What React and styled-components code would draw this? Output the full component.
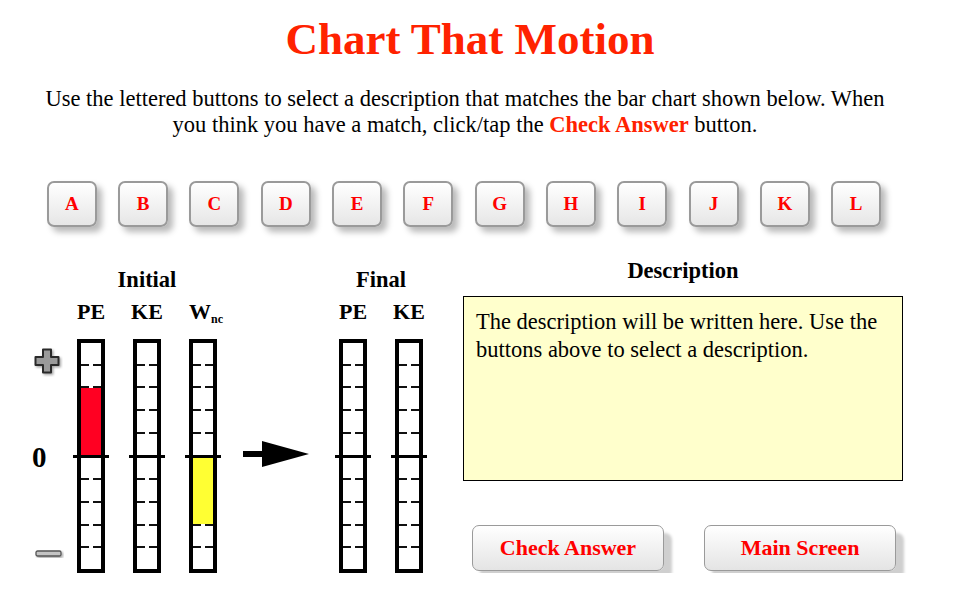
import React from "react";
import styled, { createGlobalStyle } from "styled-components";

const GlobalStyle = createGlobalStyle`
  html, body { margin: 0; padding: 0; background: #ffffff; }
  body { font-family: "Liberation Serif", "Times New Roman", serif; color: #000; }
`;

const Page = styled.div`
  width: 930px;
  padding-top: 14px;
  display: flex;
  flex-direction: column;
`;

const Title = styled.h1`
  margin: 0;
  padding-left: 10px;
  text-align: center;
  font-size: 45px;
  line-height: 50px;
  font-weight: bold;
  color: #ff2200;
`;

const Intro = styled.p`
  margin: 22px auto 0;
  width: 862px;
  text-align: center;
  font-size: 22.5px;
  line-height: 26px;
`;

const Em = styled.span`
  color: #ff2200;
  font-weight: bold;
`;

const LetterRow = styled.div`
  margin-top: 43px;
  display: flex;
  justify-content: center;
  gap: 21.3px;
  padding-right: 2px;
`;

const LetterButton = styled.button`
  width: 50px;
  height: 46px;
  box-sizing: border-box;
  border: 2px solid #9a9a9a;
  border-radius: 7px;
  background: linear-gradient(#ffffff, #e6e6e6);
  box-shadow: 5px 5px 6px rgba(0, 0, 0, 0.28);
  font-family: "Liberation Serif", serif;
  font-weight: bold;
  font-size: 19px;
  color: #ff0000;
  padding: 0;
  cursor: pointer;
`;

const Section = styled.div`
  margin-top: 33px;
  display: flex;
  align-items: flex-start;
`;

const ChartArea = styled.div`
  display: flex;
  align-items: flex-end;
  padding: 9px 0 0 32px;
`;

const ScaleColumn = styled.div`
  width: 31px;
  height: 234px;
  display: flex;
  flex-direction: column;
  align-items: flex-start;
  margin-right: 14px;
`;

const PlusIcon = styled.svg`
  margin: 9px 0 0 2px;
  display: block;
`;

const ZeroLabel = styled.div`
  margin-top: 68px;
  font-size: 29px;
  font-weight: bold;
  line-height: 24px;
`;

const MinusIcon = styled.svg`
  margin: 81px 0 0 3px;
  display: block;
`;

const Group = styled.div`
  display: flex;
  flex-direction: column;
  align-items: center;
  margin-left: ${(p) => p.$offset || 0}px;
`;

const GroupHeading = styled.div`
  font-size: 22.5px;
  font-weight: bold;
  line-height: 22px;
  margin-bottom: 10px;
`;

const BarsRow = styled.div`
  display: flex;
  gap: 28px;
`;

const BarColumn = styled.div`
  width: 28px;
  display: flex;
  flex-direction: column;
  align-items: center;
`;

const BarLabel = styled.div`
  font-size: 22px;
  font-weight: bold;
  line-height: 22px;
  margin-bottom: 16px;
  white-space: nowrap;
  padding-left: ${(p) => p.$shift || 0}px;
`;

const Sub = styled.span`
  font-size: 12px;
  line-height: 0;
  vertical-align: -4px;
`;

const BarFrame = styled.div`
  width: 28px;
  height: 234px;
  box-sizing: border-box;
  border: 4px solid #000;
  display: flex;
  flex-direction: column;
  background: #fff;
`;

const Cell = styled.div`
  flex: 1;
  background: ${(p) => p.$fill || "#ffffff"};
`;

const Tick = styled.div`
  height: 2px;
  flex-shrink: 0;
  background: ${(p) =>
    p.$fill
      ? p.$fill
      : "linear-gradient(to right, #111 0 42%, transparent 42% 58%, #111 58% 100%)"};
`;

const ZeroLine = styled.div`
  height: 3px;
  flex-shrink: 0;
  margin: 0 -8px;
  background: #000;
`;

const Arrow = styled.svg`
  display: block;
  margin: 0 0 106px 26px;
`;

const DescColumn = styled.div`
  margin-left: 40px;
  width: 440px;
  display: flex;
  flex-direction: column;
`;

const DescHeading = styled.div`
  text-align: center;
  font-size: 22.5px;
  font-weight: bold;
  line-height: 22px;
`;

const DescBox = styled.div`
  margin-top: 14px;
  height: 185px;
  box-sizing: border-box;
  border: 1px solid #000;
  background: #ffffcc;
  padding: 11px 12px;
  font-size: 22.5px;
  line-height: 28px;
`;

const ActionRow = styled.div`
  margin-top: 44px;
  display: flex;
  justify-content: space-between;
  padding: 0 7px 0 9px;
`;

const ActionButton = styled.button`
  width: 192px;
  height: 46px;
  box-sizing: border-box;
  border: 1px solid #9a9a9a;
  border-radius: 7px;
  background: linear-gradient(#ffffff, #e4e4e4);
  box-shadow: 8px 8px 3px #cfcfcf;
  font-family: "Liberation Serif", serif;
  font-weight: bold;
  font-size: 22px;
  color: #ff0000;
  padding: 0;
  cursor: pointer;
`;

const RED = "#ff0022";
const YELLOW = "#ffff33";

function Bar({ fills }) {
  const parts = [];
  for (let i = 0; i < 10; i++) {
    parts.push(<Cell key={"c" + i} $fill={fills[i]} />);
    if (i < 9) {
      if (i === 4) parts.push(<ZeroLine key={"z"} />);
      else {
        const covered = fills[i] && fills[i] === fills[i + 1] ? fills[i] : null;
        parts.push(<Tick key={"t" + i} $fill={covered} />);
      }
    }
  }
  return <BarFrame>{parts}</BarFrame>;
}

const empty = Array(10).fill(null);
const peInitial = [null, null, RED, RED, RED, null, null, null, null, null];
const wInitial = [null, null, null, null, null, YELLOW, YELLOW, YELLOW, null, null];

const letters = ["A", "B", "C", "D", "E", "F", "G", "H", "I", "J", "K", "L"];

export default function App() {
  return (
    <>
      <GlobalStyle />
      <Page>
        <Title>Chart That Motion</Title>
        <Intro>
          Use the lettered buttons to select a description that matches the bar chart shown below. When
          you think you have a match, click/tap the <Em>Check Answer</Em> button.
        </Intro>
        <LetterRow>
          {letters.map((l) => (
            <LetterButton key={l}>{l}</LetterButton>
          ))}
        </LetterRow>
        <Section>
          <ChartArea>
            <ScaleColumn>
              <PlusIcon width="29" height="29" viewBox="0 0 29 29">
                <defs>
                  <filter id="sh" x="-30%" y="-30%" width="160%" height="160%">
                    <feDropShadow dx="1.5" dy="1.5" stdDeviation="1" floodColor="#000" floodOpacity="0.35" />
                  </filter>
                </defs>
                <path
                  d="M9 1.5 H17 V9 H24.5 V17 H17 V24.5 H9 V17 H1.5 V9 H9 Z"
                  fill="#9a9a9a"
                  stroke="#2a2a2a"
                  strokeWidth="2"
                  strokeLinejoin="round"
                  filter="url(#sh)"
                />
              </PlusIcon>
              <ZeroLabel>0</ZeroLabel>
              <MinusIcon width="29" height="9" viewBox="0 0 29 9">
                <rect x="1" y="1" width="25" height="5" rx="1.5" fill="#c4c4c4" stroke="#555" strokeWidth="1.3" filter="url(#sh)" />
              </MinusIcon>
            </ScaleColumn>
            <Group>
              <GroupHeading>Initial</GroupHeading>
              <BarsRow>
                <BarColumn>
                  <BarLabel>PE</BarLabel>
                  <Bar fills={peInitial} />
                </BarColumn>
                <BarColumn>
                  <BarLabel>KE</BarLabel>
                  <Bar fills={empty} />
                </BarColumn>
                <BarColumn>
                  <BarLabel $shift={6}>
                    W<Sub>nc</Sub>
                  </BarLabel>
                  <Bar fills={wInitial} />
                </BarColumn>
              </BarsRow>
            </Group>
            <Arrow width="66" height="26" viewBox="0 0 66 26">
              <rect x="0" y="10" width="21" height="6" fill="#000" />
              <polygon points="19,0 66,13 19,26" fill="#000" />
            </Arrow>
            <Group $offset={30}>
              <GroupHeading>Final</GroupHeading>
              <BarsRow>
                <BarColumn>
                  <BarLabel>PE</BarLabel>
                  <Bar fills={empty} />
                </BarColumn>
                <BarColumn>
                  <BarLabel>KE</BarLabel>
                  <Bar fills={empty} />
                </BarColumn>
              </BarsRow>
            </Group>
          </ChartArea>
          <DescColumn>
            <DescHeading>Description</DescHeading>
            <DescBox>
              The description will be written here. Use the buttons above to select a description.
            </DescBox>
            <ActionRow>
              <ActionButton>Check Answer</ActionButton>
              <ActionButton>Main Screen</ActionButton>
            </ActionRow>
          </DescColumn>
        </Section>
      </Page>
    </>
  );
}
